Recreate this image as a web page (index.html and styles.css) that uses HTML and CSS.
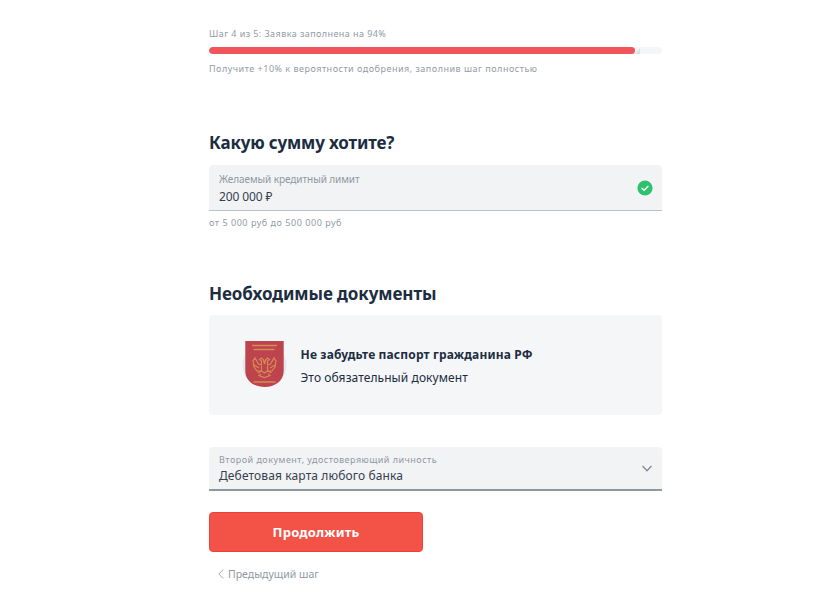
FILE: index.html
```html
<!DOCTYPE html>
<html lang="ru">
<head>
<meta charset="utf-8">
<title>Заявка на кредитную карту</title>
<link rel="stylesheet" href="styles.css">
</head>
<body>
<main class="form">
  <section class="progress">
    <p class="note step"><span>Шаг 4 из 5: Заявка заполнена на 94%</span></p>
    <div class="track"><div class="bar"></div><div class="mark"></div></div>
    <p class="note tip"><span>Получите +10% к вероятности одобрения, заполнив шаг полностью</span></p>
  </section>

  <section class="amount">
    <h2 class="title title-amount"><span>Какую сумму хотите?</span></h2>
    <div class="field">
      <div class="field-text">
        <span class="label label-amount">Желаемый кредитный лимит</span>
        <span class="value value-amount">200 000 ₽</span>
      </div>
      <svg class="check" viewBox="0 0 16 16"><circle cx="8" cy="8" r="7.6" fill="#2fc26e"/><path d="M4.6 8l2.5 2.3 4.3-4.2" fill="none" stroke="#fff" stroke-width="1.4"/></svg>
    </div>
    <p class="note hint"><span>от 5 000 руб до 500 000 руб</span></p>
  </section>

  <section class="documents">
    <h2 class="title title-docs"><span>Необходимые документы</span></h2>
    <div class="card">
      <svg class="passport" viewBox="0 0 46 50">
        <circle cx="23.5" cy="25" r="22" fill="#e1e9ef"/>
        <path d="M4.3 1h38.4v30c0 10-9 16-19.2 16S4.3 41 4.3 31z" fill="#bd434c"/>
        <g fill="none" stroke="#d68b58" stroke-width="1.5">
          <path d="M11 5.5h25M12.5 9.5h21M12.5 42h22"/>
          <path stroke-width="1.2" d="M23.5 24l-1-4-2-2-2 1.500 2 1.500v4l-3-1-3.500-6-2 3 1 6 3 4 5 0M23.500 24l1-4 2-2 2 1.500-2 1.500v4l3-1 3.500-6 2 3-1 6-3 4-5 0M13 25l5 3M34 25l-5 3M20.500 26v5l3 2 3-2v-5M20.500 31l-4 2M26.500 31l4 2M20 34l-2 1.500 5.500 2 5.500-2-2-1.500"/>
        </g>
      </svg>
      <div class="card-text">
        <span class="card-title">Не забудьте паспорт гражданина РФ</span>
        <span class="card-sub">Это обязательный документ</span>
      </div>
    </div>
    <div class="field select">
      <div class="field-text">
        <span class="label label-doc">Второй документ, удостоверяющий личность</span>
        <span class="value value-doc">Дебетовая карта любого банка</span>
      </div>
      <svg class="chevron" viewBox="0 0 12 8"><path d="M1.500 2l4.500 4.700 4.500-4.700" fill="none" stroke="#7f8b98" stroke-width="1.300"/></svg>
    </div>
  </section>

  <button class="submit" type="button"><span>Продолжить</span></button>
  <a class="back"><svg class="arrow" viewBox="0 0 6 10"><path d="M5.2.5L.8 5l4.400 4.500" fill="none" stroke="#a0a8b1"/></svg><span class="back-text">Предыдущий шаг</span></a>
</main>
</body>
</html>
```
FILE: styles.css
```css
* { box-sizing: border-box; }
body {
  margin: 0;
  height: 600px;
  overflow: hidden;
  background: #fff;
  color: #1c2d41;
  font-family: "Noto Sans", "Open Sans", sans-serif;
}
p, h2 { margin: 0; }
span { white-space: nowrap; }
.form { width: 453px; margin-left: 209px; padding-top: 27px; }
.note { font-size: 9px; line-height: 14px; color: #929ba6; }
.step { letter-spacing: 0.43px; }
.tip { letter-spacing: 0.5px; }
.hint { letter-spacing: 0.54px; margin-top: 5px; }
.track {
  display: flex;
  align-items: flex-end;
  height: 7px;
  margin: 6px 0 8px;
  border-radius: 4px;
  background: #f4f6f8;
  overflow: hidden;
}
.bar { width: 426px; height: 7px; border-radius: 4px; background: #f1545a; }
.mark { width: 5px; height: 6px; background: #dce1e5; clip-path: polygon(100% 0, 100% 100%, 0 100%); }
.title { font-size: 17px; line-height: 26px; font-weight: 700; letter-spacing: -0.17px; }
.title-docs { letter-spacing: -0.08px; }
.amount { margin-top: 54px; }
.field {
  display: flex;
  align-items: center;
  justify-content: space-between;
  height: 46px;
  padding: 0 9px 0 10px;
  border-radius: 4px 4px 0 0;
  border-bottom: 1px solid #b9c1c9;
  background: #f2f3f5;
}
.title + .field { margin-top: 9px; }
.field-text { display: flex; flex-direction: column; }
.label { font-size: 10px; line-height: 16px; color: #8f98a3; letter-spacing: -0.07px; }
.label-doc { font-size: 9px; letter-spacing: 0.48px; }
.value { font-size: 12px; line-height: 17px; color: #35414e; }
.value-amount { line-height: 18px; padding-top: 1px; margin-bottom: -1px; letter-spacing: -0.1px; }
.value-doc { letter-spacing: 0.12px; line-height: 16px; }
.check { width: 16px; height: 16px; }
.documents { margin-top: 51px; }
.card {
  display: flex;
  align-items: center;
  gap: 13px;
  height: 100px;
  margin-top: 8px;
  padding-left: 32px;
  border-radius: 4px;
  background: #f5f6f8;
}
.passport { width: 46px; height: 50px; }
.card-text { display: flex; flex-direction: column; gap: 1px; padding: 2px 0 0 0.5px; }
.card-title { font-size: 12px; line-height: 22px; font-weight: 700; letter-spacing: 0.16px; }
.card-sub { font-size: 12px; line-height: 22px; letter-spacing: 0.08px; }
.select { height: 44px; margin-top: 32px; border-bottom: 2px solid #8d98a5; }
.chevron { width: 12px; height: 8px; }
.submit {
  display: block;
  width: 214px;
  height: 40px;
  margin-top: 21px;
  padding: 0 0 1px;
  border: 1px solid #ef4038;
  border-radius: 4px;
  background: #f35246;
  color: #fff;
  font: 700 13px/20px "Noto Sans", "Open Sans", sans-serif;
  letter-spacing: 0.2px;
}
.back { display: flex; align-items: center; gap: 4px; margin: 14px 0 0 9px; color: #8f98a3; font-size: 10.5px; line-height: 16px; }
.arrow { width: 6px; height: 10px; }
```
